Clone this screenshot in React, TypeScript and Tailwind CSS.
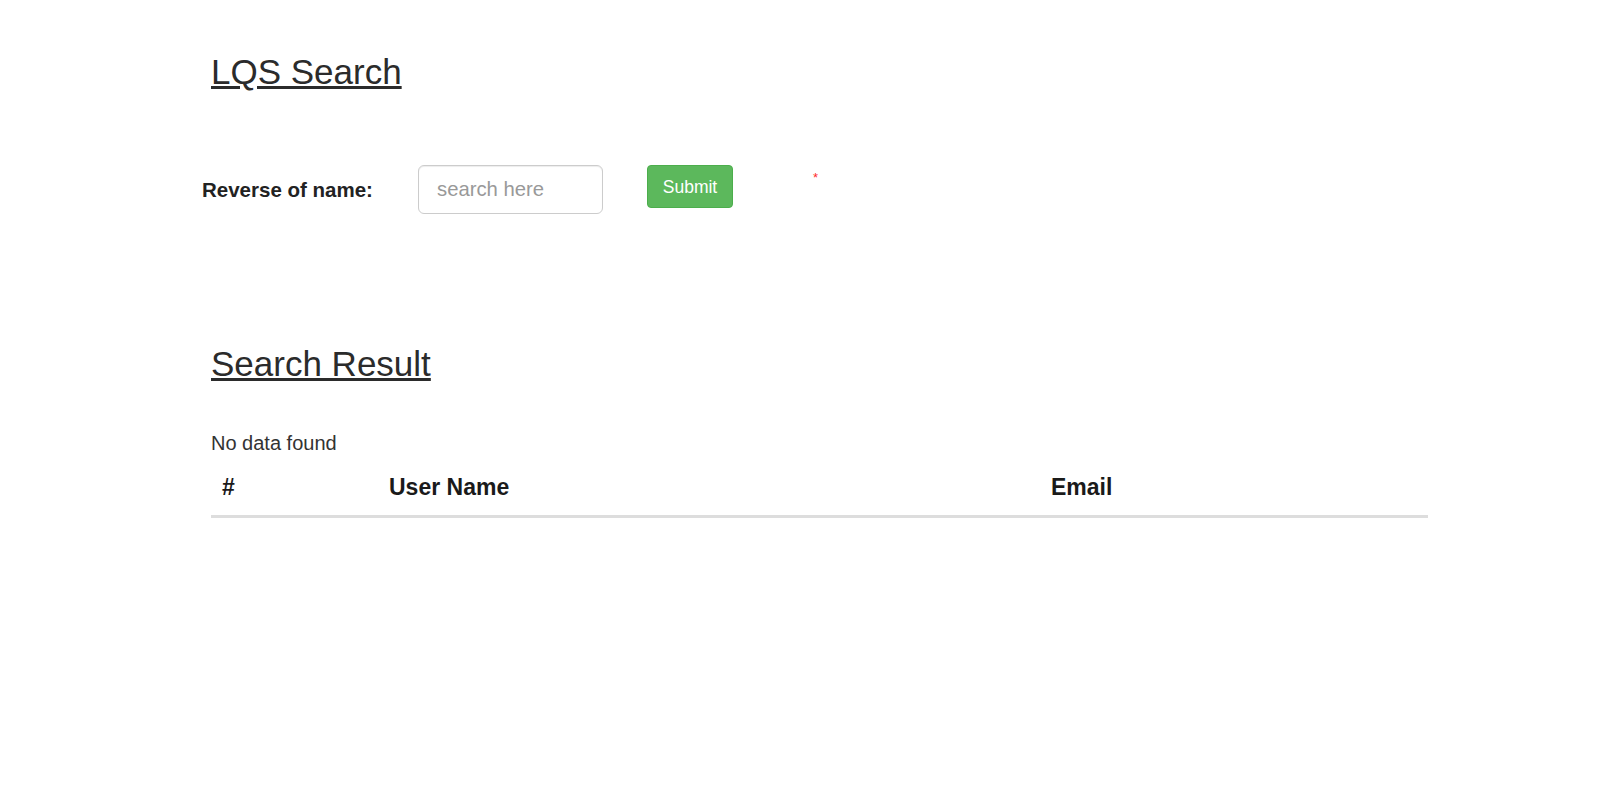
import React from "react";

export default function App() {
  return (
    <div
      className="min-h-[794px] w-full bg-white text-[#333]"
      style={{ fontFamily: '"Liberation Sans", Arial, sans-serif' }}
    >
      <div className="ml-[211px] w-[1217px] pt-[52px]">
        <h1 className="text-[35px] leading-[40px] font-normal underline text-[#2b2b2b]">
          LQS Search
        </h1>

        <form
          className="mt-[73px] flex items-start"
          onSubmit={(e) => e.preventDefault()}
        >
          <label className="-ml-[9px] mt-[13px] w-[216px] shrink-0 text-[20.5px] leading-[24px] font-bold text-[#222]">
            Reverse of name:
          </label>
          <input
            type="text"
            placeholder="search here"
            className="h-[49px] w-[185px] shrink-0 rounded-[6px] border border-[#cccccc] pl-[18px] pr-3 text-[20.3px] text-[#555] shadow-[inset_0_1px_1px_rgba(0,0,0,0.075)] outline-none placeholder:text-[#999]"
            style={{ fontFamily: '"Liberation Sans", Arial, sans-serif' }}
          />
          <button
            type="submit"
            className="ml-[44px] h-[43px] w-[86px] shrink-0 rounded-[4px] border border-[#4cae4c] bg-[#5cb85c] text-[17.5px] leading-[20px] text-white"
          >
            Submit
          </button>
          <span className="ml-[80px] mt-[5px] text-[13px] leading-[15px] text-[#ff2a2a]">
            *
          </span>
        </form>

        <h2 className="mt-[130px] text-[35px] leading-[40px] font-normal underline text-[#2b2b2b]">
          Search Result
        </h2>

        <p className="mt-[47px] text-[20px] leading-[24px] text-[#333]">
          No data found
        </p>

        <div className="mt-[17px] grid h-[46px] grid-cols-[167px_662px_388px] border-b-[3px] border-[#dddddd] pt-[1px] text-[23px] leading-[28px] font-bold text-[#1a1a1a]">
          <div className="pl-[11px]">#</div>
          <div className="pl-[11px]">User Name</div>
          <div className="pl-[11px]">Email</div>
        </div>
      </div>
    </div>
  );
}
